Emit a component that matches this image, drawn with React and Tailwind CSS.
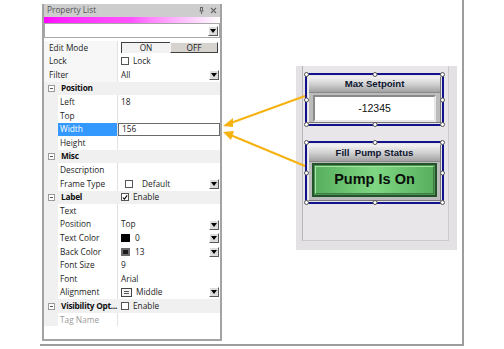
import React from "react";

// Property list panel + HMI canvas with two selected widgets

const DropBtn = () => (
  <span className="ml-auto mr-[1px] flex h-[10px] w-[10px] items-center justify-center border border-t-white border-l-white border-r-[#5a5a5a] border-b-[#5a5a5a] bg-[#dcdcdc]">
    <svg width="6" height="4" viewBox="0 0 6 4">
      <path d="M0 0h6L3 4z" fill="#000" />
    </svg>
  </span>
);

const Box = ({ checked }) => (
  <span className="flex h-[8px] w-[8px] items-center justify-center border border-[#555] bg-white">
    {checked && (
      <svg width="7" height="7" viewBox="0 0 7 7">
        <path d="M1 3.5l1.8 2L6 1" stroke="#000" strokeWidth="1.3" fill="none" />
      </svg>
    )}
  </span>
);

const Minus = () => (
  <span className="flex h-[7px] w-[7px] items-center justify-center border border-[#9a9a9a] bg-white">
    <span className="h-px w-[3px] bg-[#555]" />
  </span>
);

const rows = [
  { label: "Edit Mode", kind: "toggle" },
  { label: "Lock", kind: "check", text: "Lock" },
  { label: "Filter", text: "All", drop: true },
  { cat: "Position" },
  { label: "Left", text: "18", sub: true },
  { label: "Top", sub: true },
  { label: "Width", text: "156", sub: true, selected: true },
  { label: "Height", sub: true },
  { cat: "Misc" },
  { label: "Description", sub: true },
  { label: "Frame Type", kind: "frame", text: "Default", sub: true, drop: true },
  { cat: "Label", check: true, checked: true },
  { label: "Text", sub: true },
  { label: "Position", text: "Top", sub: true, drop: true },
  { label: "Text Color", kind: "black", text: "0", sub: true, drop: true },
  { label: "Back Color", kind: "dark", text: "13", sub: true, drop: true },
  { label: "Font Size", text: "9", sub: true },
  { label: "Font", text: "Arial", sub: true },
  { label: "Alignment", kind: "align", text: "Middle", sub: true, drop: true },
  { cat: "Visibility Opt...", check: true },
  { label: "Tag Name", sub: true, disabled: true },
];

function Value({ row }) {
  if (row.kind === "toggle") {
    return (
      <div className="flex h-full w-full items-center pl-[3px] pr-[2px]">
        <span className="flex h-[11px] w-[49px] items-center justify-center border-l border-t border-[#404040] bg-[#f2f2f2]">ON</span>
        <span className="flex h-[11px] flex-1 items-center justify-center border border-t-[#f8f8f8] border-l-[#f8f8f8] border-r-[#404040] border-b-[#404040] bg-[#d6d3cf]">OFF</span>
      </div>
    );
  }
  if (row.selected) {
    return (
      <div className="flex h-full w-full items-center border border-[#6a6a6a] bg-white pl-[3px]">{row.text}</div>
    );
  }
  return (
    <div className="flex h-full w-full items-center pl-[3px]">
      {row.kind === "check" && (
        <span className="mr-[4px]">
          <Box />
        </span>
      )}
      {row.kind === "frame" && (
        <span className="ml-[4px] mr-[9px]">
          <Box />
        </span>
      )}
      {row.kind === "black" && <span className="mr-[5px] h-[8px] w-[9px] bg-black" />}
      {row.kind === "dark" && (
        <span className="mr-[5px] flex h-[8px] w-[9px] items-center justify-center bg-[#6a6a6a]">
          <span className="h-[4px] w-[5px] bg-[#1a1a1a]" />
        </span>
      )}
      {row.kind === "align" && (
        <span className="mr-[4px] flex h-[9px] w-[11px] flex-col items-center justify-center gap-px border border-[#444] bg-[#f4f4f4]">
          <span className="h-px w-[5px] bg-[#555]" />
          <span className="h-px w-[5px] bg-[#555]" />
        </span>
      )}
      {row.text && <span>{row.text}</span>}
      {row.drop && <DropBtn />}
    </div>
  );
}

function Row({ row }) {
  if (row.cat) {
    return (
      <div className="flex h-[13.6px] items-center bg-[#f0f0f0]">
        <span className="ml-[4px] mr-[6px]">
          <Minus />
        </span>
        <span className="w-[57px] whitespace-nowrap font-bold tracking-[-0.25px] text-[#111]">{row.cat}</span>
        {row.check && (
          <span className="flex items-center gap-[4px] pl-[3px]">
            <Box checked={row.checked} />
            <span>Enable</span>
          </span>
        )}
      </div>
    );
  }
  return (
    <div className="flex h-[13.6px] items-center">
      <div className={`flex h-full w-[73px] items-center ${row.sub ? "" : "bg-[#f7f7f7]"}`}>
        {row.sub && <span className="h-full w-[14px] bg-[#f0f0f0]" />}
        <span
          className={`flex h-full flex-1 items-center ${row.sub ? "pl-[2px]" : "pl-[5px]"} ${
            row.selected ? "bg-[#3399ff] text-white" : row.disabled ? "text-[#9a9a9a]" : ""
          }`}
        >
          {row.label}
        </span>
      </div>
      <div className="h-full flex-1 border-l border-[#e2e2e2]">
        <Value row={row} />
      </div>
    </div>
  );
}

function PropertyList() {
  return (
    <div className="flex h-[337px] w-[180px] flex-col border-x-2 border-b-2 border-[#a3a3a3] bg-white font-['Open_Sans',sans-serif] text-[8.3px] leading-none text-[#222]">
      <div className="flex h-[13px] items-center bg-[#cdcdcd] pl-[3px] text-[#555]">
        <span>Property List</span>
        <span className="ml-auto mr-[6px] text-[#666]">
          <svg width="5" height="7" viewBox="0 0 5 7">
            <path d="M1 0.5h3M1.5 0.5v3.5M3.5 0.5v3.5M0.5 4h4M2.5 4v3" stroke="#666" fill="none" />
          </svg>
        </span>
        <span className="mr-[3px]">
          <svg width="7" height="7" viewBox="0 0 7 7">
            <path d="M1 1l5 5M6 1L1 6" stroke="#666" strokeWidth="1.1" />
          </svg>
        </span>
      </div>
      <div className="h-[6px] bg-linear-to-r from-[#ff00ff] via-[#ff55ff] to-white" />
      <div className="flex h-[15px] items-center border border-[#a8a8a8] bg-white">
        <DropBtn />
      </div>
      <div className="h-[3px]" />
      {rows.map((r, i) => (
        <Row key={i} row={r} />
      ))}
      <div className="flex-1" />
    </div>
  );
}

const Handles = () => {
  const pts = [
    "left-[-3px] top-[-3px]",
    "left-1/2 -translate-x-1/2 top-[-3px]",
    "right-[-3px] top-[-3px]",
    "left-[-3px] top-1/2 -translate-y-1/2",
    "right-[-3px] top-1/2 -translate-y-1/2",
    "left-[-3px] bottom-[-3px]",
    "left-1/2 -translate-x-1/2 bottom-[-3px]",
    "right-[-3px] bottom-[-3px]",
  ];
  return pts.map((p, i) => (
    <span key={i} className={`absolute ${p} h-[5px] w-[5px] rounded-full border border-[#555] bg-white`} />
  ));
};

const Strip = ({ children, h }) => (
  <div
    className={`flex ${h} items-center justify-center border-b border-[#8a8a8a] bg-linear-to-b from-[#f2f2f2] via-[#cfcfcf] to-[#a2a2a2] text-[9.6px] font-bold text-[#0d1530]`}
  >
    {children}
  </div>
);

function Canvas() {
  return (
    <div className="ml-[74px] mt-[62px] h-[184px] w-[161px] bg-[#e4e1e4] pb-[9px] pl-[6px] pr-[8px] font-['Liberation_Sans',Arial,sans-serif]">
      <div className="h-full border-x border-b border-[#cdc9cd] border-l-[#b9b5b9] bg-[#e9e6e9] pl-[2px] pt-[7px]">
        <div className="relative h-[53px] w-[139px] border-2 border-[#12128a] p-px">
          <div className="flex h-full flex-col border border-t-[#eeeeee] border-l-[#eeeeee] border-r-[#777] border-b-[#777] bg-[#bcbcbc]">
            <Strip h="h-[16px]">Max Setpoint</Strip>
            <div className="mx-[4px] mt-[2px] flex h-[27px] items-center justify-center border-2 border-t-[#8a8a8a] border-l-[#8a8a8a] border-r-[#e8e8e8] border-b-[#e8e8e8] bg-white text-[10.5px] text-[#111]">
              -12345
            </div>
          </div>
          <Handles />
        </div>
        <div className="relative mt-[15px] h-[63px] w-[139px] border-2 border-[#12128a] p-px">
          <div className="flex h-full flex-col border border-t-[#eeeeee] border-l-[#eeeeee] border-r-[#777] border-b-[#777] bg-[#bcbcbc]">
            <Strip h="h-[17px]">Fill&nbsp;&nbsp;Pump Status</Strip>
            <div className="mx-[3px] mt-px flex h-[34px] items-center justify-center border-2 border-[#24522a] bg-[#4a9450] p-px">
              <div className="flex h-full w-full items-center justify-center border border-t-[#a8e4a8] border-l-[#a8e4a8] border-r-[#3e7e44] border-b-[#3e7e44] bg-linear-to-r from-[#58b05e] via-[#7fd683] to-[#58b05e] text-[14.5px] font-bold text-[#0a0f0a]">
                Pump Is On
              </div>
            </div>
          </div>
          <Handles />
        </div>
      </div>
    </div>
  );
}

export default function App() {
  return (
    <div className="relative h-[349px] w-[504px] overflow-hidden bg-white">
      <div className="ml-[40px] flex h-[346px] w-[424px] border-b-2 border-r-2 border-[#9d9d9d] pt-[4px]">
        <div className="ml-[2px]">
          <PropertyList />
        </div>
        <Canvas />
      </div>
      <svg className="pointer-events-none absolute left-0 top-0" width="504" height="349">
        <g stroke="#f6b20e" strokeWidth="2" fill="#f6b20e">
          <line x1="305" y1="96" x2="228" y2="124" />
          <line x1="305" y1="166" x2="228" y2="134" />
          <polygon points="223,126 233,118 233,127" stroke="none" />
          <polygon points="223,132 234,131 231,140" stroke="none" />
        </g>
      </svg>
    </div>
  );
}
